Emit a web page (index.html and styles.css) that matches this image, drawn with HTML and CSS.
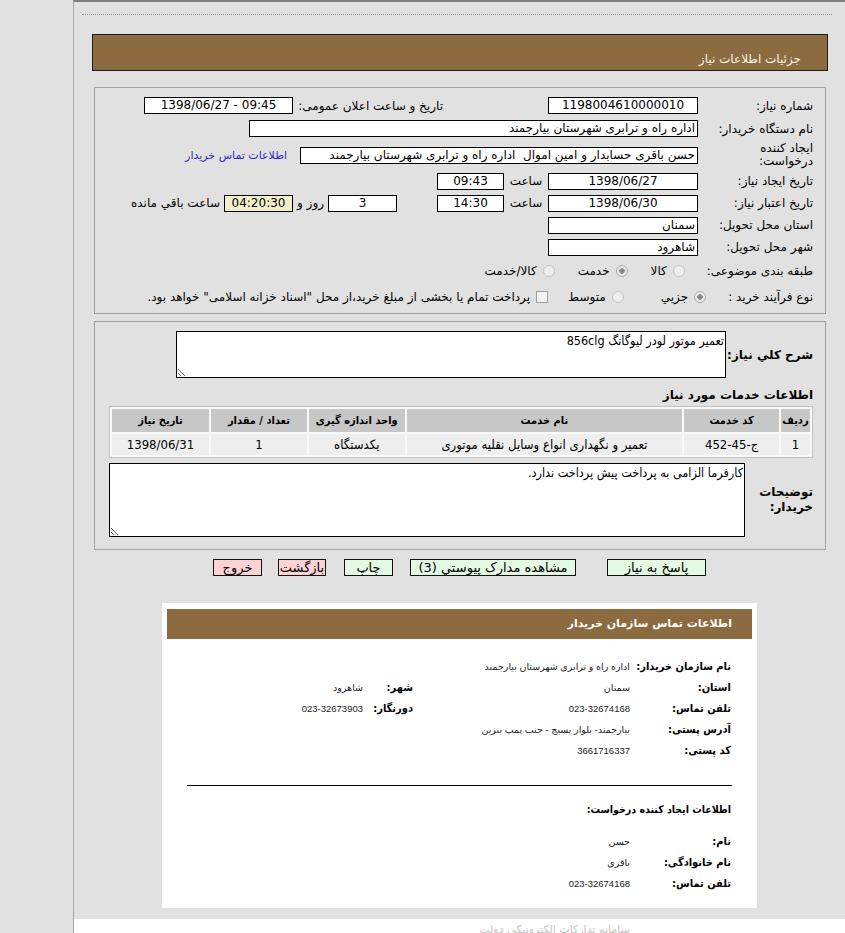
FILE: index.html
```html
<!DOCTYPE html>
<html lang="fa">
<head>
<meta charset="utf-8">
<title>جزئیات اطلاعات نیاز</title>
<link rel="stylesheet" href="styles.css">
</head>
<body>
<div class="page">
  <div class="side"></div>
  <div class="main">
    <div class="dots"></div>
    <div class="title-bar"><span>جزئیات اطلاعات نیاز</span></div>

    <section class="box box-info">
      <div class="row r1">
        <div class="lbl">شماره نیاز:</div>
        <div class="field w150 c">1198004610000010</div>
        <div class="lbl2">تاریخ و ساعت اعلان عمومی:</div>
        <div class="field w149 c ltr">1398/06/27 - 09:45</div>
      </div>
      <div class="row r2">
        <div class="lbl">نام دستگاه خریدار:</div>
        <div class="field w449">اداره راه و ترابری شهرستان بیارجمند</div>
      </div>
      <div class="row r3">
        <div class="lbl two">ایجاد کننده<br>درخواست:</div>
        <div class="field w398">حسن باقری حسابدار و امین اموال&nbsp; اداره راه و ترابری شهرستان بیارجمند</div>
        <a class="contact-link" href="#">اطلاعات تماس خریدار</a>
      </div>
      <div class="row r4">
        <div class="lbl">تاریخ ایجاد نیاز:</div>
        <div class="field w150 c">1398/06/27</div>
        <div class="hour">ساعت</div>
        <div class="field w67 c">09:43</div>
      </div>
      <div class="row r5">
        <div class="lbl">تاریخ اعتبار نیاز:</div>
        <div class="field w150 c">1398/06/30</div>
        <div class="hour">ساعت</div>
        <div class="field w67 c">14:30</div>
        <div class="field w69 c days-field">3</div>
        <div class="days">روز و</div>
        <div class="field w69 c remain-field">04:20:30</div>
        <div class="remain">ساعت باقي مانده</div>
      </div>
      <div class="row r6">
        <div class="lbl">استان محل تحویل:</div>
        <div class="field w150">سمنان</div>
      </div>
      <div class="row r7">
        <div class="lbl">شهر محل تحویل:</div>
        <div class="field w150">شاهرود</div>
      </div>
      <div class="row r8">
        <div class="lbl-auto">طبقه بندی موضوعی:</div>
        <div class="opts">
          <div class="opt"><span class="radio"></span><span>کالا</span></div>
          <div class="opt"><span class="radio on"></span><span>خدمت</span></div>
          <div class="opt"><span class="radio"></span><span>کالا/خدمت</span></div>
        </div>
      </div>
      <div class="row r9">
        <div class="lbl-auto">نوع فرآیند خرید :</div>
        <div class="opts">
          <div class="opt wide-gap"><span class="radio on"></span><span>جزيي</span></div>
          <div class="opt"><span class="radio"></span><span>متوسط</span></div>
          <div class="opt"><span class="check"></span><span>پرداخت تمام یا بخشی از مبلغ خرید،از محل "اسناد خزانه اسلامی" خواهد بود.</span></div>
        </div>
      </div>
    </section>

    <section class="box box-desc">
      <div class="row desc-row">
        <div class="lbl-b">شرح کلي نياز:</div>
        <textarea class="ta ta1" readonly>تعمیر موتور لودر لیوگانگ 856clg</textarea>
      </div>
      <h3 class="sub-head">اطلاعات خدمات مورد نیاز</h3>
      <table class="svc">
        <thead>
          <tr>
            <th class="col-a">ردیف</th>
            <th class="col-b">کد خدمت</th>
            <th class="col-c">نام خدمت</th>
            <th class="col-d">واحد اندازه گیری</th>
            <th class="col-e">تعداد / مقدار</th>
            <th class="col-f">تاریخ نیاز</th>
          </tr>
        </thead>
        <tbody>
          <tr>
            <td>1</td>
            <td><span class="ltr">ج-45-452</span></td>
            <td>تعمیر و نگهداری انواع وسایل نقلیه موتوری</td>
            <td>یکدستگاه</td>
            <td>1</td>
            <td>1398/06/31</td>
          </tr>
        </tbody>
      </table>
      <div class="row note-row">
        <div class="lbl-b note-lbl">توضیحات<br>خریدار:</div>
        <textarea class="ta ta2" readonly>کارفرما الزامی به پرداخت پیش پرداخت ندارد.</textarea>
      </div>
    </section>

    <div class="buttons">
      <button class="btn green b1" type="button">پاسخ به نیاز</button>
      <button class="btn green b2" type="button">مشاهده مدارک پیوستي (3)</button>
      <button class="btn green b3" type="button">چاپ</button>
      <button class="btn pink b4" type="button">بازگشت</button>
      <button class="btn pink b5" type="button">خروج</button>
    </div>

    <div class="panel">
      <div class="panel-head">اطلاعات تماس سازمان خریدار</div>
      <div class="p-rows first">
        <div class="p-row"><div class="p-lbl">نام سازمان خریدار:</div><div class="p-val wide">اداره راه و ترابری شهرستان بیارجمند</div></div>
        <div class="p-row"><div class="p-lbl">استان:</div><div class="p-val">سمنان</div><div class="p-lbl2">شهر:</div><div class="p-val">شاهرود</div></div>
        <div class="p-row"><div class="p-lbl">تلفن تماس:</div><div class="p-val">023-32674168</div><div class="p-lbl2">دورنگار:</div><div class="p-val">023-32673903</div></div>
        <div class="p-row"><div class="p-lbl">آدرس پستی:</div><div class="p-val wide">بیارجمند- بلوار بسیج - جنب پمپ بنزین</div></div>
        <div class="p-row"><div class="p-lbl">کد پستی:</div><div class="p-val">3661716337</div></div>
      </div>
      <div class="p-hr"></div>
      <div class="p-sub">اطلاعات ایجاد کننده درخواست:</div>
      <div class="p-rows second">
        <div class="p-row"><div class="p-lbl">نام:</div><div class="p-val">حسن</div></div>
        <div class="p-row"><div class="p-lbl">نام خانوادگی:</div><div class="p-val">باقری</div></div>
        <div class="p-row"><div class="p-lbl">تلفن تماس:</div><div class="p-val">023-32674168</div></div>
      </div>
    </div>

    <div class="footer"><span>سامانه تدارکات الکترونیکی دولت</span></div>
  </div>
</div>
</body>
</html>
```
FILE: styles.css
```css
* { box-sizing: border-box; }
html, body { margin: 0; padding: 0; }
body {
  width: 845px;
  height: 933px;
  overflow: hidden;
  background: #e1e1e1;
  font-family: "DejaVu Sans", sans-serif;
  font-size: 12px;
  color: #000;
}
.page { display: flex; height: 933px; }
.side { width: 73px; flex: none; }
.main {
  flex: 1;
  display: flex;
  flex-direction: column;
  direction: rtl;
  border-left: 1px solid #a8a8a8;
  border-top: 2px solid #7e7e7e;
}
.main > * { flex: none; }
.ltr { direction: ltr; unicode-bidi: isolate; display: inline-block; }

.dots { margin: 12px 13px 0 8px; border-top: 1px dotted #9a9a9a; }

.title-bar {
  margin: 19px 17px 0 18px;
  height: 37px;
  border: 1px solid #1a1a1a;
  background: #8c6b40;
  color: #fbf3e4;
  font-size: 12px;
  display: flex;
  align-items: center;
  padding: 12px 26px 0 0;
}

.box {
  margin: 16px 19px 0 20px;
  border: 1px solid #a3a3a3;
}
.box-info { padding: 6px 12px 3px 0; }
.row { display: flex; align-items: center; }
.r1, .r2 { height: 23px; }
.r3 { height: 30px; }
.r4, .r5, .r6, .r7 { height: 22px; }
.r8, .r9 { height: 26px; }

.lbl { width: 115px; flex: none; white-space: nowrap; }
.lbl.two { line-height: 13px; white-space: normal; }
.lbl2 { width: 150px; flex: none; margin-right: 105px; white-space: nowrap; }
.lbl-auto { flex: none; white-space: nowrap; }

.field {
  flex: none;
  height: 17px;
  line-height: 15px;
  background: #fff;
  border: 1px solid #000;
  padding: 0 2px;
  white-space: nowrap;
  overflow: hidden;
}
.field.c { text-align: center; }
.field.ltr { display: block; direction: ltr; }
.w150 { width: 150px; }
.w149 { width: 149px; }
.w449 { width: 449px; }
.w398 { width: 398px; }
.w67 { width: 67px; }
.w69 { width: 69px; }
.hour { width: 44px; flex: none; text-align: center; }
.days-field { margin-right: 40px; }
.days { width: 35px; flex: none; text-align: center; }
.remain-field { background: #f2f0c9; }
.remain { margin-right: 4px; white-space: nowrap; }
.contact-link { margin-right: 13px; color: #2a2ac8; text-decoration: none; white-space: nowrap; font-size: 11px; }

.opts { display: flex; align-items: center; margin-right: 22px; }
.opt { display: flex; align-items: center; margin-left: 23px; white-space: nowrap; }
.r9 .opt { margin-left: 20px; }
.r9 .opt.wide-gap { margin-left: 37px; }
.radio {
  width: 12px;
  height: 12px;
  border-radius: 50%;
  border: 1px solid #c3c3c3;
  background: #eeeeee;
  margin-left: 6px;
  flex: none;
}
.radio.on {
  border-color: #a9a9a9;
  background: radial-gradient(circle, #8a8a8a 0 2.5px, #e9e9e9 3px);
}
.check {
  width: 12px;
  height: 12px;
  border: 1px solid #9d9d9d;
  background: #f3f3f3;
  margin-left: 6px;
  flex: none;
}

.box-desc { margin-top: 7px; padding: 9px 12px 12px 13px; }
.lbl-b { flex: none; font-weight: bold; font-size: 12px; }
.desc-row .lbl-b { width: 87px; }
.ta {
  flex: none;
  direction: rtl;
  font-family: "DejaVu Sans Condensed", "DejaVu Sans", sans-serif;
  font-stretch: condensed;
  font-size: 12.5px;
  border: 1px solid #000;
  background: #fff;
  padding: 1px 1px;
  margin: 0;
  resize: both;
  overflow: hidden;
}
.ta1 { width: 550px; height: 47px; }
.sub-head {
  margin: 8px 0 0;
  height: 18px;
  line-height: 18px;
  font-size: 12px;
  font-weight: bold;
}
.svc {
  margin-top: 2px;
  width: 704px;
  border: 1px solid #c2c2c2;
  border-spacing: 2px;
  background: #f9f9f9;
  font-family: "DejaVu Sans Condensed", "DejaVu Sans", sans-serif;
  font-stretch: condensed;
}
.svc th {
  height: 23px;
  background: #c7c7c7;
  font-weight: bold;
  font-size: 11px;
  padding: 0;
}
.svc td {
  height: 21px;
  background: #eeeeee;
  text-align: center;
  font-size: 13px;
  padding: 0;
}
.col-a { width: 29px; }
.col-b { width: 95px; }
.col-c { width: 276px; }
.col-d { width: 96px; }
.col-e { width: 96px; }
.col-f { width: 97px; }
.note-row { margin-top: 5px; }
.note-lbl { width: 68px; line-height: 15px; }
.ta2 { width: 636px; height: 74px; }

.buttons { display: flex; justify-content: center; margin-top: 9px; }
.btn {
  height: 17px;
  margin: 0;
  padding: 0;
  border: 1px solid #111;
  font-family: "DejaVu Sans", sans-serif;
  font-size: 13px;
  line-height: 15px;
  color: #000;
  white-space: nowrap;
  overflow: hidden;
}
.green { background: #e3fbe3; }
.pink { background: #fdd3d3; }
.b1 { width: 99px; }
.b2 { width: 166px; margin-right: 31px; }
.b3 { width: 49px; margin-right: 17px; }
.b4 { width: 48px; margin-right: 18px; }
.b5 { width: 49px; margin-right: 16px; }

.panel {
  margin: 27px auto 0;
  width: 595px;
  height: 305px;
  background: #fff;
  padding: 6px 5px 0;
}
.panel-head {
  height: 30px;
  line-height: 30px;
  background: #8c6b40;
  color: #fff;
  font-weight: bold;
  font-size: 11px;
  padding-right: 20px;
}
.p-rows.first { margin-top: 17px; }
.p-rows.second { margin-top: 11px; }
.p-row { display: flex; align-items: center; height: 21px; padding-right: 21px; }
.p-lbl {
  width: 101px;
  flex: none;
  font-family: "DejaVu Sans Condensed", "DejaVu Sans", sans-serif;
  font-stretch: condensed;
  font-weight: bold;
  font-size: 11px;
  white-space: nowrap;
}
.p-val {
  width: 217px;
  flex: none;
  font-family: "Liberation Sans", "DejaVu Sans", sans-serif;
  font-size: 9.5px;
  color: #222;
  white-space: nowrap;
}
.p-val.wide { width: 300px; }
.p-lbl2 {
  width: 50px;
  flex: none;
  font-family: "DejaVu Sans Condensed", "DejaVu Sans", sans-serif;
  font-stretch: condensed;
  font-weight: bold;
  font-size: 11px;
}
.p-hr { margin: 24px 20px 0; border-top: 1px solid #000; }
.p-sub {
  margin-top: 13px;
  height: 21px;
  line-height: 21px;
  padding-right: 21px;
  font-family: "DejaVu Sans Condensed", "DejaVu Sans", sans-serif;
  font-stretch: condensed;
  font-weight: bold;
  font-size: 10.5px;
}

.footer {
  margin-top: 11px;
  height: 40px;
  background: #fff;
  text-align: center;
  padding: 4px 0 0 190px;
  color: #c4c4c4;
  font-size: 11px;
}
```
